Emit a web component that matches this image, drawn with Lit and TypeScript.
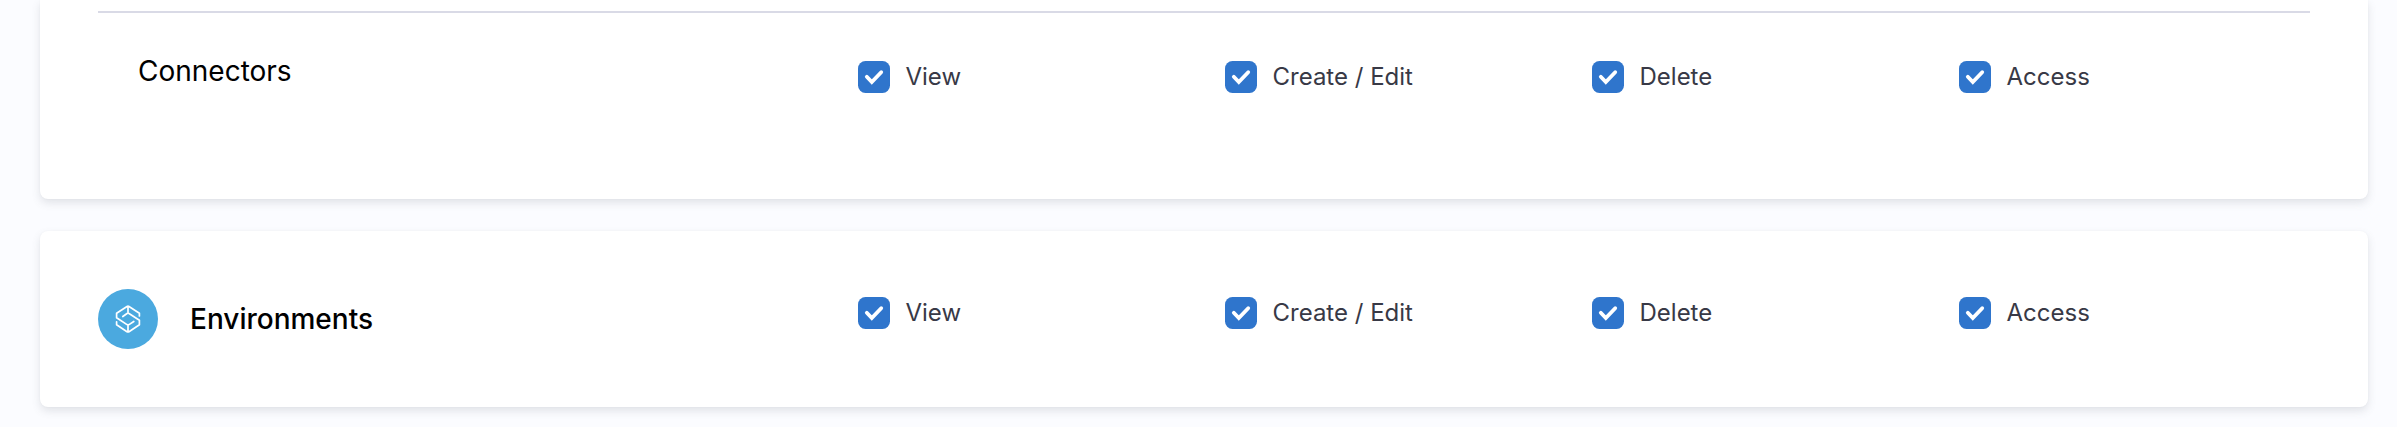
import { LitElement, html, css } from 'lit';
import { customElement } from 'lit/decorators.js';

const PERMISSIONS = ['View', 'Create / Edit', 'Delete', 'Access'];

@customElement('permission-row')
class PermissionRow extends LitElement {
  static styles = css`
    :host { display: grid; grid-template-columns: repeat(4, 367px); }
    .item { display: flex; align-items: flex-start; gap: 15.5px; height: 32px; font-size: 24px; line-height: 32px; color: #383946; white-space: nowrap; }
    .box { width: 32px; height: 32px; flex: none; display: block; }
  `;
  render() {
    return PERMISSIONS.map(p => html`<div class="item">
      <svg class="box" viewBox="0 0 32 32"><rect width="32" height="32" rx="7.5" fill="#2f75cc"/><path d="M8.8 15.8l5 5.2 9.4-9.8" fill="none" stroke="#fff" stroke-width="3.8" stroke-linecap="round"/></svg>
      <span>${p}</span></div>`);
  }
}

@customElement('app-root')
class AppRoot extends LitElement {
  static styles = css`
    :host { display: block; box-sizing: border-box; height: 427px; overflow: hidden; padding: 0 29px 0 40px; background: #fbfcff; font-family: Inter, sans-serif; }
    .card { box-sizing: border-box; background: #fff; box-shadow: 0 0 2px rgba(40,41,61,.04), 0 4px 8px rgba(96,97,112,.16); }
    .first { height: 199px; border-radius: 0 0 8px 8px; padding: 11px 58px 0; }
    .second { height: 176px; margin-top: 32px; border-radius: 8px; padding: 58px 58px 0; }
    .rule { height: 2px; background: #d9dae6; }
    .row { display: grid; grid-template-columns: 760px 1fr; align-items: start; }
    .name { font-size: 28px; line-height: 34px; color: #000; margin: 41px 0 0 40px; }
    .perms { margin-top: 48px; }
    .title { display: flex; align-items: center; gap: 32px; font-size: 28px; font-weight: 500; color: #000; }
    .logo { width: 60px; height: 60px; display: block; }
    .second .perms { margin-top: 8px; }
  `;
  render() {
    return html`
      <div class="card first"><div class="rule"></div>
        <div class="row"><div class="name">Connectors</div><permission-row class="perms"></permission-row></div>
      </div>
      <div class="card second"><div class="row">
        <div class="title"><svg class="logo" viewBox="0 0 60 60"><circle cx="30" cy="30" r="30" fill="#4ba9df"/><g fill="none" stroke="#fff" stroke-width="1.7" stroke-linejoin="round" stroke-linecap="round"><path d="M41.4 27V24.2L31 17.5Q30 16.9 29 17.5L18.6 24.2V28.8L29 35.6Q30 36.2 31 35.6L35.8 32.5M30 17.2V24M18.6 32.8V35.8L29 42.7Q30 43.3 31 42.7L41.4 35.8V31.2L31 24.5Q30 23.9 29 24.5L24.8 27.5M30 43V36.2"/></g></svg><span>Environments</span></div>
        <permission-row class="perms"></permission-row>
      </div></div>`;
  }
}
